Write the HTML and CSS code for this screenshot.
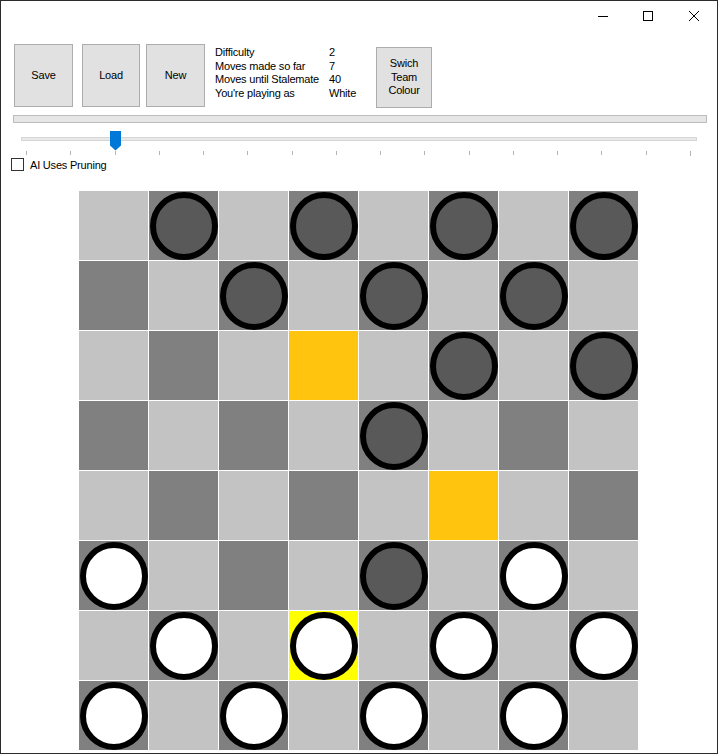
FILE: index.html
```html
<!DOCTYPE html>
<html>
<head>
<meta charset="utf-8">
<link rel="stylesheet" href="styles.css">
</head>
<body>
<div class="window">
  <div class="titlebar">
    <div class="cap-btn"><svg width="12" height="12" viewBox="0 0 12 12"><path d="M1 6.5H11" stroke="#000" stroke-width="1" fill="none"/></svg></div>
    <div class="cap-btn"><svg width="12" height="12" viewBox="0 0 12 12"><rect x="1.5" y="1.5" width="9" height="9" stroke="#000" stroke-width="1" fill="none"/></svg></div>
    <div class="cap-btn"><svg width="12" height="12" viewBox="0 0 12 12"><path d="M1 1L11 11M11 1L1 11" stroke="#000" stroke-width="1" fill="none"/></svg></div>
  </div>

  <div class="toolbar">
    <button class="btn btn-save">Save</button>
    <button class="btn btn-load">Load</button>
    <button class="btn btn-new">New</button>
    <div class="info">
      <div class="info-row"><span class="info-label">Difficulty</span><span>2</span></div>
      <div class="info-row"><span class="info-label">Moves made so far</span><span>7</span></div>
      <div class="info-row"><span class="info-label">Moves until Stalemate</span><span>40</span></div>
      <div class="info-row"><span class="info-label">You're playing as</span><span>White</span></div>
    </div>
    <button class="btn btn-swich">Swich<br>Team<br>Colour</button>
  </div>

  <div class="progress"></div>

  <div class="slider">
    <div class="track"></div>
    <svg class="thumb" width="11" height="20" viewBox="0 0 11 20"><path d="M0 0H11V14.5L5.5 19.5L0 14.5Z" fill="#0078d7"/></svg>
    <div class="ticks">
      <i></i><i></i><i></i><i></i><i></i><i></i><i></i><i></i>
      <i></i><i></i><i></i><i></i><i></i><i></i><i></i><i class="last"></i>
    </div>
  </div>

  <label class="check">
    <span class="box"></span>
    <span>AI Uses Pruning</span>
  </label>

  <div class="board" id="board"></div>
</div>
<script src="script.js"></script>
</body>
</html>
```

FILE: styles.css
```css
html, body {
  margin: 0;
  padding: 0;
  background: #ffffff;
}

.window {
  width: 718px;
  height: 754px;
  box-sizing: border-box;
  border: 1px solid #2b2b2b;
  background: #ffffff;
  display: flex;
  flex-direction: column;
  font-family: "Liberation Sans", Arial, sans-serif;
  font-size: 11px;
  letter-spacing: -0.2px;
  color: #000;
  overflow: hidden;
}

.titlebar {
  height: 30px;
  display: flex;
  justify-content: flex-end;
  flex-shrink: 0;
}

.cap-btn {
  width: 45px;
  height: 30px;
  display: flex;
  align-items: center;
  justify-content: center;
}
.cap-btn:last-child {
  width: 47px;
}

.toolbar {
  height: 71px;
  margin-top: 13px;
  padding-left: 13px;
  display: flex;
  align-items: flex-start;
  flex-shrink: 0;
}

.btn {
  font-family: "Liberation Sans", Arial, sans-serif;
  font-size: 11px;
  letter-spacing: -0.2px;
  color: #000;
  background: #e1e1e1;
  border: 1px solid #adadad;
  padding: 0;
  margin: 0;
  box-sizing: border-box;
  height: 63px;
  line-height: 13px;
}

.btn-save { width: 59px; }
.btn-load { width: 58px; margin-left: 9px; }
.btn-new { width: 59px; margin-left: 6px; }

.info {
  margin-left: 10px;
  margin-top: 2px;
  width: 161px;
}
.info-row {
  display: flex;
  height: 13.5px;
  line-height: 13.5px;
  white-space: nowrap;
}
.info-label {
  width: 114px;
}

.btn-swich {
  width: 56px;
  height: 61px;
  margin-top: 3px;
  line-height: 13.5px;
}

.progress {
  margin-left: 12px;
  width: 694px;
  height: 8px;
  box-sizing: border-box;
  background: #e6e6e6;
  border: 1px solid #bcbcbc;
  flex-shrink: 0;
}

.slider {
  position: relative;
  height: 35px;
  flex-shrink: 0;
}
.track {
  margin-top: 14px;
  margin-left: 20px;
  width: 676px;
  height: 4px;
  box-sizing: border-box;
  background: #e7eae7;
  border: 1px solid #d6d6d6;
}
.thumb {
  position: absolute;
  left: 109px;
  top: 8px;
}
.ticks {
  margin-top: 10px;
  margin-left: 25px;
  width: 665px;
  display: flex;
  justify-content: space-between;
  align-items: flex-start;
}
.ticks i {
  display: block;
  width: 1px;
  height: 4px;
  background: #b4b4b4;
}
.ticks i.last {
  height: 5px;
}

.check {
  display: flex;
  align-items: center;
  height: 13px;
  margin-left: 10px;
  flex-shrink: 0;
}
.check .box {
  width: 13px;
  height: 13px;
  box-sizing: border-box;
  border: 1px solid #333333;
  background: #fff;
  margin-right: 6px;
}

.board {
  margin-top: 20px;
  margin-left: 78px;
  width: 559px;
  display: grid;
  grid-template-columns: repeat(8, 69px);
  grid-auto-rows: 69px;
  gap: 1px;
  background: #ffffff;
  flex-shrink: 0;
}

.cell {
  display: flex;
  align-items: center;
  justify-content: center;
}
.cell.light { background: #c3c3c3; }
.cell.dark { background: #808080; }
.cell.hl { background: #ffc40d; }
.cell.sel { background: #ffff00; }

.piece {
  width: 68px;
  height: 68px;
  box-sizing: border-box;
  border-radius: 50%;
  border: 6px solid #000;
}
.piece.black { background: #595959; }
.piece.white { background: #ffffff; }
```

FILE: script.js
```js
(function () {
  // b = dark piece, w = white piece, h = highlighted empty, s = selected white piece
  var layout = [
    ". b . b . b . b",
    ". . b . b . b .",
    ". . . h . b . b",
    ". . . . b . . .",
    ". . . . . h . .",
    "w . . . b . w .",
    ". w . s . w . w",
    "w . w . w . w ."
  ];
  var board = document.getElementById('board');
  for (var r = 0; r < 8; r++) {
    var row = layout[r].split(' ');
    for (var c = 0; c < 8; c++) {
      var cell = document.createElement('div');
      var k = row[c];
      var cls = ((r + c) % 2 === 1) ? 'dark' : 'light';
      if (k === 'h') cls = 'hl';
      if (k === 's') cls = 'sel';
      cell.className = 'cell ' + cls;
      if (k === 'b' || k === 'w' || k === 's') {
        var p = document.createElement('div');
        p.className = 'piece ' + (k === 'b' ? 'black' : 'white');
        cell.appendChild(p);
      }
      board.appendChild(cell);
    }
  }
})();
```
